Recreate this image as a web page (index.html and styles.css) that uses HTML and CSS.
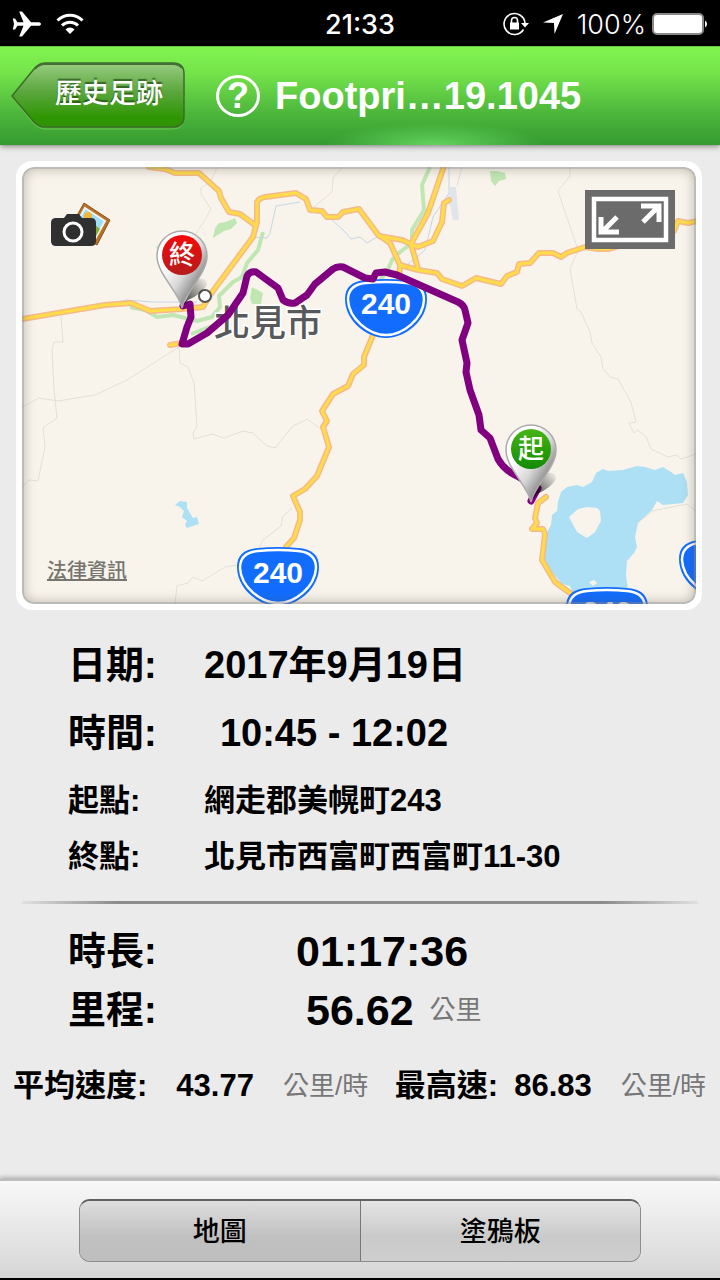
FILE: index.html
```html
<!DOCTYPE html>
<html lang="zh-Hant">
<head>
    <meta charset="UTF-8">
    <meta name="viewport" content="width=device-width, initial-scale=1.0">
    <title>歷史足跡</title>
    <link rel="stylesheet" href="styles.css">
</head>
<body>
    <div class="status-bar">
        <div class="status-left">
            <svg width="30" height="26" viewBox="0 0 30 26" fill="#fff"><path d="M29 13c0-1.300-1.500-1.800-3-1.800h-7L10 0.500H7.200l4.300 10.700H5.500L3 7.500H0.800l1.200 5.500-1.200 5.500H3l2.500-3.700h6L7.200 25.500H10l9-10.700h7c1.500 0 3-.5 3-1.800z"/></svg>
            <svg width="28" height="22" viewBox="0 0 28 22" fill="none" stroke="#fff" stroke-width="3"><path d="M1.500 7.500a17.500 17.500 0 0 1 25 0M6 12.500a11.500 11.500 0 0 1 16 0"/><path d="M14 21l-4.500-4.600a6.500 6.500 0 0 1 9 0z" fill="#fff" stroke="none"/></svg>
        </div>
        <span class="clock">21:33</span>
        <div class="status-right">
            <svg width="26" height="24" viewBox="0 0 26 24"><path d="M20.500 17.500A10.500 10.500 0 1 1 22 11" fill="none" stroke="#fff" stroke-width="1.600"/><path d="M18 11h8l-4 4.500z" fill="#fff"/><rect x="7" y="10.500" width="9" height="7" fill="#fff"/><path d="M8.500 11V8.500a3 3 0 0 1 6 0V11" fill="none" stroke="#fff" stroke-width="1.600"/></svg>
            <svg width="20" height="20" viewBox="0 0 20 20" fill="#fff"><path d="M20 0L11.500 20l-.5-11L0 8.500z"/></svg>
            <span class="percent">100%</span>
            <svg class="battery" width="56" height="22" viewBox="0 0 56 22"><rect x="1" y="1" width="50" height="20" rx="4" fill="#fff" stroke="#888" stroke-width="2"/><path d="M53 7.500a4 4 0 0 1 0 7z" fill="#fff"/></svg>
        </div>
    </div>

    <header class="nav-bar">
        <button class="back-button" type="button">
            <svg class="back-shape" viewBox="0 0 174 68" preserveAspectRatio="none">
                <defs>
                    <linearGradient id="backFill" x1="0" y1="0" x2="0" y2="1">
                        <stop offset="0" stop-color="#98cd80"/>
                        <stop offset="0.450" stop-color="#5ba63e"/>
                        <stop offset="0.850" stop-color="#2f9702"/>
                        <stop offset="1" stop-color="#2f9306"/>
                    </linearGradient>
                </defs>
                <path d="M1 34L23 7Q28 2 34 2H162Q172 2 172 12V55Q172 65 162 65H34Q28 65 23 60Z" fill="none" stroke="#6cc44c" stroke-width="1" transform="translate(0 2)"/>
                <path d="M1 34L23 7Q28 1 34 1H162Q173 1 173 12V54Q173 65 162 65H34Q28 65 23 60Z" fill="url(#backFill)" stroke="#3c6d28" stroke-width="1.500"/>
                <path d="M24 7Q28 2 34 2H162Q168 2 171 6" fill="none" stroke="#456d36" stroke-width="2"/>
            </svg>
            <span>歷史足跡</span>
        </button>
        <button class="help-button" type="button" aria-label="說明">?</button>
        <h1>Footpri…19.1045</h1>
    </header>

    <main>
        <section class="map-card">
            <div class="map">
                <svg class="map-drawing" viewBox="22 167 674 437" preserveAspectRatio="xMidYMid slice">
                    <defs>
                        <linearGradient id="redFill" x1="0" y1="0" x2="0" y2="1">
                            <stop offset="0" stop-color="#f40a0a"/>
                            <stop offset="1" stop-color="#b51c1c"/>
                        </linearGradient>
                        <linearGradient id="greenFill" x1="0" y1="0" x2="0" y2="1">
                            <stop offset="0" stop-color="#47b516"/>
                            <stop offset="1" stop-color="#128a02"/>
                        </linearGradient>
                        <linearGradient id="pinFill" x1="0" y1="0" x2="1" y2="1">
                            <stop offset="0.300" stop-color="#fff"/>
                            <stop offset="0.550" stop-color="#d8d8d8"/>
                            <stop offset="0.800" stop-color="#777"/>
                        </linearGradient>
                        <linearGradient id="pinShade" x1="0" y1="1" x2="1" y2="0">
                            <stop offset="0" stop-color="#000" stop-opacity="0.800"/>
                            <stop offset="1" stop-color="#000" stop-opacity="0"/>
                        </linearGradient>
                        <g id="shield">
                            <path d="M-20 1Q0-1 20 1C34 2 41 8 41 20C41 42 19 59 0 59C-19 59-41 42-41 20C-41 8-34 2-20 1Z" fill="#126dff"/>
                            <path d="M-20 4Q0 2 20 4C32 5 38 10 38 21C37 40 17 56 0 56C-17 56-37 40-38 21C-38 10-32 5-20 4Z" fill="none" stroke="#fff" stroke-width="2.500"/>
                        </g>
                        <g id="pin">
                            <path d="M1 50L14 24Q25 20 25 29Q20 38 6 44Z" fill="url(#pinShade)"/>
                            <path d="M0 52C-3 36-25 18-25 0A25 25 0 0 1 25 0C25 18 3 36 0 52Z" fill="url(#pinFill)" stroke="#aaa" stroke-width="1.500"/>
                        </g>
                        <g id="roads">
                            <path d="M149 167L165 169L175 173H199L219 191L221 198L229 212L240 214L255 225"/>
                            <path d="M22 319L105 305L131 303L150 311L182 309L203 307L210 295L253 237L257 222V202Q259 198 265 197L296 193L306 199L310 210L322 211L327 217H338L343 212L359 209L379 236L402 240L411 244"/>
                            <path d="M380 236L390 243L400 265L399 280M400 265L418 270L437 273L442 279L462 286L476 278L501 284L507 276L517 272L519 264L530 263L539 253H553L561 257L567 253L585 247L598 249L608 249L640 240L674 231L678 221L688 223L697 221"/>
                            <path d="M444 166L428 213L411 244L415 258L418 269M411 244L418 247L433 241L442 222L444 203L449 200"/>
                            <path d="M373 335L364 357V365L353 374L348 386L333 394L322 411L327 421L323 427L329 447L317 476L305 489L293 496L300 512V520L294 538L286 547L284 560"/>
                            <path d="M546 497L538 503L535 518L537 523L532 529L543 529L545 534L542 560L555 582L570 593L580 600M170 345L182 343"/>
                        </g>
                    </defs>

                    <rect x="22" y="167" width="674" height="437" fill="#f8f4ec"/>

                    <!-- parks and river banks -->
                    <g fill="#c0e6b4">
                        <path d="M213 238L215 228L219 223L226 222L235 218L237 223L231 229L224 231Z"/>
                        <path d="M252 287L263 293L261 304H252L250 298Z"/>
                        <path d="M490 171L497 171L505 173L506 179L499 181L495 186L491 181Z"/>
                        <path d="M156 248L161 241L163 252Z"/>
                    </g>
                    <g fill="none" stroke="#c0e6b4" stroke-width="4" stroke-linejoin="round">
                        <path d="M130 307L145 310L157 317L173 315L197 321L212 317L220 307L219 296L233 282L242 277L247 263L258 250L263 232"/>
                        <path d="M430 167L422 185L424 210L412 230V243L400 252L392 260L387 272L380 280"/>
                        <path d="M191 334L212 326"/>
                    </g>

                    <!-- lakes -->
                    <g fill="#ade0f4">
                        <path d="M547 532L551 525L552 515L557 511L558 502L561 492L567 487L577 485L583 487L592 482L596 473L603 469L608 471L623 470L637 466L645 467L655 470L663 467L671 472L675 475L683 473L687 482L688 495L683 503L663 505L657 501L652 510L638 523L635 537L637 547L634 553L627 561L626 575L628 590V604H577L570 586L562 584L552 572L544 560Z"/>
                        <path d="M175 505L180 501L187 502V508L193 518L197 517L199 524L193 526L187 528L185 525L187 521L182 517L184 511L180 507Z"/>
                    </g>
                    <path d="M569 517L578 509L587 507L597 508L600 511L601 521L595 532L587 538L577 532Z" fill="#f8f4ec"/>
                    <path d="M589 582L594 580L597 583L593 586Z" fill="#f8f4ec"/>

                    <!-- minor boundaries -->
                    <g fill="none" stroke="#e2e0d8" stroke-width="1">
                        <path d="M217 167L211 181L201 188V194L211 209L203 223L196 233M343 167L333 178L332 192L314 207"/>
                        <path d="M61 316L63 342H54L52 350L54 390L57 418L43 428L45 447L38 481L29 480L22 487"/>
                        <path d="M22 407L39 398L58 401L95 395L127 380L179 347L180 363L188 367L194 383L197 427L193 433L194 439L212 434L224 438L243 431L253 433L267 446L275 448L293 426L307 419L321 429"/>
                        <path d="M175 604L177 586L188 583L193 577L202 581L225 567L237 565M259 548L263 540L281 526L283 516L292 508"/>
                        <path d="M570 167V176L558 191L578 250L570 269L577 309L581 312L590 332L592 343L601 357L603 369L610 377L618 379L624 390L631 402L636 422L629 423L634 433L638 430L646 437L651 449L668 457L676 455L681 459L696 454M638 523L652 511L687 504L696 511M462 167L457 186"/>
                    </g>
                    <g fill="none" stroke="#c6d6e6" stroke-width="1">
                        <path d="M253 237L267 238L270 233L276 206L300 202M330 218L345 232L351 239L360 237L367 243L377 237M449 167V193L433 217L425 250L407 265M105 304L127 300L153 302H197"/>
                    </g>
                    <path d="M450 187H456L459 220L453 220L450 205L447 204Z" fill="#dfe5ea"/>

                    <use href="#roads" class="road-edge"/>
                    <use href="#roads" class="road-core"/>

                    <circle cx="205" cy="296" r="6" fill="#fff" stroke="#555" stroke-width="2"/>
                    <text class="town" x="214" y="336">北見市</text>

                    <use href="#shield" x="386" y="279"/>
                    <text class="route-number" x="386" y="314">240</text>
                    <use href="#shield" x="278" y="547"/>
                    <text class="route-number" x="278" y="583">240</text>
                    <use href="#shield" x="607" y="587"/>
                    <text class="route-number" x="607" y="622">240</text>
                    <use href="#shield" x="720" y="539"/>

                    <path class="track" d="M183 306L190 304L191 317L187 327L182 344H188L207 333L228 315L243 293L247 276Q250 271 256 272L278 288L283 300Q288 304 295 303L307 295L315 284L333 269Q337 266 343 267L365 278L373 279L376 273L385 272L397 275L458 302Q464 305 465 310L468 323L462 340L467 363L466 372L470 390L479 415L481 430L490 438L498 459Q504 470 517 476L538 488L531 501"/>

                    <use href="#pin" x="182" y="256"/>
                    <circle cx="182" cy="255" r="20" fill="url(#redFill)"/>
                    <text class="pin-text" x="182" y="264">終</text>
                    <use href="#pin" x="531" y="450"/>
                    <circle cx="531" cy="449" r="20" fill="url(#greenFill)"/>
                    <text class="pin-text" x="531" y="458">起</text>
                </svg>

                <button class="photo-button" type="button" aria-label="相片">
                    <svg width="62" height="48" viewBox="0 0 62 48">
                        <path d="M34 1L60 18L47 43L20 26Z" fill="#b97229" stroke="#8d5218" stroke-width="1"/>
                        <path d="M35 6L55 19L45 37L25 24Z" fill="#9fdcf8" stroke="#eef6f4" stroke-width="2"/>
                        <circle cx="38" cy="14" r="4" fill="#f2b534"/>
                        <path d="M44 22L50 27L45 36L38 30Z" fill="#84ae2f"/>
                        <path d="M6 16H14L17 12H29L32 16H41Q46 16 46 21V39Q46 44 41 44H6Q1 44 1 39V21Q1 16 6 16Z" fill="#303030"/>
                        <circle cx="23" cy="30" r="9" fill="none" stroke="#fff" stroke-width="3"/>
                    </svg>
                </button>
                <button class="expand-button" type="button" aria-label="全螢幕">
                    <svg width="90" height="59" viewBox="0 0 90 59">
                        <rect x="9" y="9" width="72" height="41" fill="none" stroke="#fff" stroke-width="4.500"/>
                        <g fill="none" stroke="#fff" stroke-width="5">
                            <path d="M32 27L17 42M16 27V42H34"/>
                            <path d="M58 32L73 17M56 16H74V32"/>
                        </g>
                    </svg>
                </button>
                <a class="legal" href="#">法律資訊</a>
            </div>
        </section>

        <dl class="details">
            <div class="row large">
                <dt>日期:</dt>
                <dd class="centered">2017年9月19日</dd>
            </div>
            <div class="row large">
                <dt>時間:</dt>
                <dd class="centered">10:45 - 12:02</dd>
            </div>
            <div class="row place">
                <dt>起點:</dt>
                <dd>網走郡美幌町243</dd>
            </div>
            <div class="row place">
                <dt>終點:</dt>
                <dd>北見市西富町西富町11-30</dd>
            </div>
        </dl>

        <hr class="divider">

        <dl class="totals">
            <div class="row total">
                <dt>時長:</dt>
                <dd class="duration">01:17:36</dd>
            </div>
            <div class="row total">
                <dt>里程:</dt>
                <dd class="distance">56.62<span class="unit">公里</span></dd>
            </div>
        </dl>

        <dl class="speeds">
            <div class="speed">
                <dt>平均速度:</dt>
                <dd>43.77<span class="unit">公里/時</span></dd>
            </div>
            <div class="speed maximum">
                <dt>最高速:</dt>
                <dd>86.83<span class="unit">公里/時</span></dd>
            </div>
        </dl>
    </main>

    <footer class="toolbar">
        <div class="segments">
            <button class="segment selected" type="button">地圖</button>
            <button class="segment" type="button">塗鴉板</button>
        </div>
    </footer>
</body>
</html>
```

FILE: styles.css
```css
* {
    box-sizing: border-box;
}

body {
    font-family: "Liberation Sans", "Noto Sans CJK TC", sans-serif;
    margin: 0;
    min-height: 100vh;
    display: flex;
    flex-direction: column;
    background: #ebebeb;
    color: #000;
    border-bottom: 2px solid #000;
}

button {
    font-family: inherit;
    border: none;
    padding: 0;
    background: none;
    cursor: pointer;
}

svg {
    display: block;
}

/* status bar */
.status-bar {
    display: grid;
    grid-template-columns: 1fr auto 1fr;
    align-items: center;
    height: 46px;
    padding: 2px 12px 0;
    background: #000;
    color: #fff;
    font-family: Inter, sans-serif;
    font-size: 27px;
}

.status-left,
.status-right {
    display: flex;
    align-items: center;
    gap: 14px;
}

.status-right {
    justify-content: flex-end;
}

.clock {
    font-weight: 500;
}

.percent {
    font-weight: 300;
}

.battery {
    margin-left: -8px;
}

/* navigation bar */
.nav-bar {
    display: flex;
    align-items: center;
    height: 99px;
    padding: 0 11px;
    background:
        radial-gradient(ellipse 110px 22px at 435px 100%, rgba(110, 225, 105, 0.8), rgba(90, 210, 90, 0)),
        linear-gradient(#82f450, #75e54b 25%, #4fb93d 65%, #349a30);
    border-top: 1px solid #69c743;
    box-shadow: 0 1px 6px rgba(0, 0, 0, 0.5);
    color: #fff;
}

.back-button {
    position: relative;
    width: 174px;
    height: 68px;
    padding: 0 20px 4px 42px;
    color: #fff;
    font-size: 27px;
    font-weight: 500;
    line-height: 40px;
    white-space: nowrap;
    text-shadow: 0 -2px 1px rgba(30, 70, 20, 0.7);
}

.back-button span {
    position: relative;
}

.back-shape {
    position: absolute;
    inset: 0;
    width: 100%;
    height: 100%;
}

.help-button {
    width: 44px;
    height: 42px;
    margin: 0 15px 0 31px;
    border: 3px solid #fff;
    border-radius: 50%;
    color: #fff;
    font-size: 36px;
    font-weight: bold;
    line-height: 36px;
}

h1 {
    margin: 0;
    font-size: 38px;
    font-weight: bold;
    line-height: 44px;
    white-space: nowrap;
}

/* map */
main {
    flex: 1;
    padding-bottom: 40px;
}

.map-card {
    margin: 16px 18px 0 16px;
    padding: 6px;
    background: #fff;
    border-radius: 16px;
}

.map {
    position: relative;
    overflow: hidden;
    border-radius: 12px;
}

.map::after {
    content: "";
    position: absolute;
    inset: 0;
    border: 2px solid rgba(130, 130, 130, 0.5);
    border-radius: 12px;
    box-shadow: inset 0 0 12px rgba(90, 70, 50, 0.35);
    pointer-events: none;
}

.map-drawing {
    width: 100%;
}

.road-edge,
.road-core,
.track {
    fill: none;
    stroke-linejoin: round;
    stroke-linecap: round;
}

.road-edge {
    stroke: #f5b98a;
    stroke-width: 6px;
}

.road-core {
    stroke: #ffdc48;
    stroke-width: 3px;
}

.track {
    stroke: #800080;
    stroke-width: 7px;
}

.town {
    font-size: 36px;
    font-weight: 500;
    fill: #58595b;
    stroke: #fff;
    stroke-width: 3px;
    paint-order: stroke;
}

.route-number {
    font-size: 30px;
    font-weight: bold;
    fill: #fff;
    text-anchor: middle;
}

.pin-text {
    font-size: 26px;
    font-weight: 500;
    fill: #fff;
    text-anchor: middle;
}

.photo-button {
    position: absolute;
    left: 28px;
    top: 35px;
}

.expand-button {
    position: absolute;
    right: 21px;
    top: 23px;
    background: #6b6b6b;
}

.legal {
    position: absolute;
    left: 25px;
    bottom: 18px;
    color: #777570;
    font-size: 20px;
    font-weight: 500;
    line-height: 30px;
}

/* trip details */
dl,
dd {
    margin: 0;
}

dt,
dd {
    font-weight: bold;
    white-space: nowrap;
}

.details {
    padding: 21px 0 0 68px;
}

.totals {
    padding-left: 68px;
}

.row {
    display: grid;
    grid-template-columns: 136px 1fr;
}

.large {
    font-size: 38px;
    line-height: 68px;
}

.centered {
    width: 260px;
    text-align: center;
}

.place {
    font-size: 31px;
    line-height: 56px;
}

.large + .place {
    margin-top: 6px;
}

.divider {
    height: 3px;
    margin: 16px 22px 18px;
    border: none;
    background: linear-gradient(to right, rgba(136, 136, 136, 0.1), #8c8c8c 14%, #8c8c8c 86%, rgba(136, 136, 136, 0.1));
}

.total {
    font-size: 38px;
    line-height: 59px;
}

.total dd {
    font-size: 43px;
}

.duration {
    padding-left: 92px;
}

.distance {
    display: flex;
    align-items: center;
    padding-left: 102px;
}

.unit {
    color: #777;
    font-size: 26px;
    font-weight: 400;
}

.distance .unit {
    margin-left: 16px;
}

.speeds {
    display: flex;
    justify-content: space-between;
    margin-top: 16px;
    padding: 0 14px 0 13px;
    font-size: 31px;
    line-height: 60px;
}

.speed,
.speed dd {
    display: flex;
    align-items: center;
    gap: 29px;
}

.speed.maximum {
    gap: 16px;
}

/* bottom toolbar */
.toolbar {
    display: flex;
    justify-content: center;
    padding: 18px 79px 16px;
    border-top: 2px solid #bdbdbd;
    background: linear-gradient(#f8f8f8, #d6d6d6);
    box-shadow: 0 -2px 4px rgba(0, 0, 0, 0.25);
}

.segments {
    display: flex;
    flex: 1;
    height: 63px;
    border: 1px solid #8c8c8c;
    border-top: 2px solid #606060;
    border-radius: 11px;
    overflow: hidden;
}

.segment {
    flex: 1;
    padding-bottom: 4px;
    background: linear-gradient(#e4e4e4, #cacaca 60%, #cecece);
    color: #000;
    font-size: 27px;
    font-weight: 500;
}

.segment.selected {
    border-right: 1px solid #777;
    background: linear-gradient(#dedede, #c0c0c0 60%, #bebebe);
}
```
